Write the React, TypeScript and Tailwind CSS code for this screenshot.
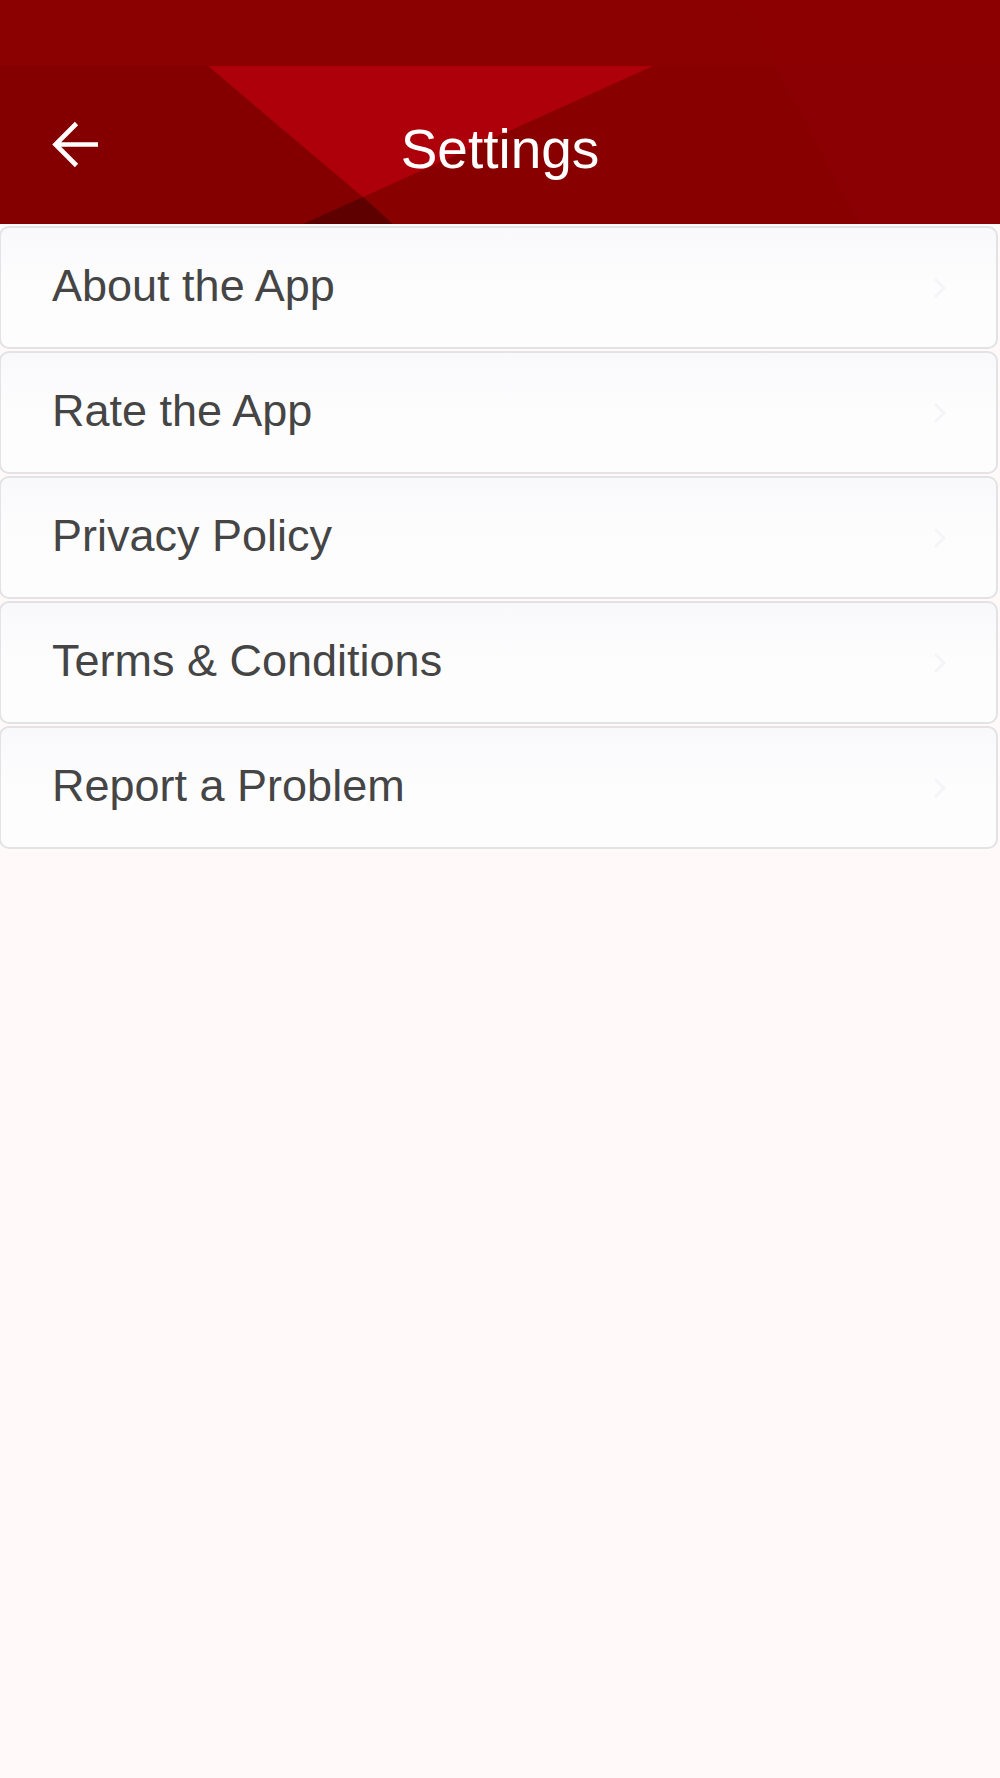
import React from "react";

const items = [
  "About the App",
  "Rate the App",
  "Privacy Policy",
  "Terms & Conditions",
  "Report a Problem",
];

function Header() {
  return (
    <div className="relative h-[224px] w-full overflow-hidden bg-[#8b0000]">
      <svg
        className="absolute inset-0 h-full w-full"
        viewBox="0 0 1000 224"
        preserveAspectRatio="none"
      >
        <rect x="0" y="0" width="1000" height="224" fill="#8b0000" />
        <polygon points="0,66 208,66 393,224 0,224" fill="#840000" />
        <polygon points="653,66 1000,66 1000,224 303,224" fill="#890000" />
        <polygon points="740,0 1000,0 1000,224 860,224" fill="#8e0004" opacity="0.5" />
        <polygon points="208,66 653,66 363,197" fill="#ae000a" />
        <polygon points="303,224 393,224 363,197" fill="#5e0000" />
      </svg>
      <div className="relative grid h-full grid-cols-[1fr_auto_1fr] items-start pt-[104px]">
        <div className="-mt-[4px] flex h-[90px] items-center pl-[51px]">
          <svg width="48" height="48" viewBox="0 0 48 48" fill="none">
            <path
              d="M47 23.5 H5 M25.5 2.5 L4.5 23.5 L25.5 44.5"
              stroke="#ffffff"
              strokeWidth="4.6"
              strokeLinecap="butt"
              strokeLinejoin="miter"
            />
          </svg>
        </div>
        <div className="flex h-[90px] items-center">
          <h1
            className="text-[55px] leading-none text-white"
            style={{ fontFamily: '"Liberation Sans", Arial, sans-serif' }}
          >
            Settings
          </h1>
        </div>
        <div />
      </div>
    </div>
  );
}

function Row({ label }: { label: string }) {
  return (
    <div className="-ml-[1px] flex h-[123px] items-center justify-between rounded-[10px] border-2 border-[#e3e3e6] bg-gradient-to-b from-[#f9f9fb] via-[#fdfdfe] to-[#fdfdfe] pb-[5px] pl-[51px] pr-[49px]">
      <span
        className="text-[45px] leading-none text-[#454545]"
        style={{ fontFamily: '"Liberation Sans", Arial, sans-serif' }}
      >
        {label}
      </span>
      <svg width="14" height="22" viewBox="0 0 14 22" fill="none" className="mt-[5px]">
        <path d="M2 2 L11 11 L2 20" stroke="#f5f5f7" strokeWidth="3" />
      </svg>
    </div>
  );
}

export default function App() {
  return (
    <div className="min-h-[1778px] w-full overflow-hidden bg-[#fffaf9]">
      <Header />
      <div className="mr-[2px] mt-[2px] flex flex-col gap-[2px]">
        {items.map((it) => (
          <Row key={it} label={it} />
        ))}
      </div>
    </div>
  );
}
